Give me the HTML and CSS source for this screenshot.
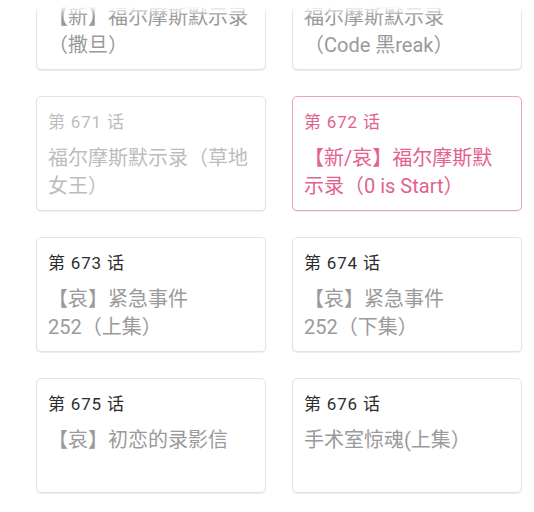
FILE: index.html
```html
<!DOCTYPE html>
<html lang="zh-CN">
<head>
<meta charset="utf-8">
<title>剧集列表</title>
<link rel="stylesheet" href="styles.css">
</head>
<body>
<div class="viewport">
  <div class="fade"></div>
  <div class="list">
    <div class="card">
      <div class="title">第 669 话</div>
      <div class="name">【新】福尔摩斯默示录（撒旦）</div>
    </div>
    <div class="card">
      <div class="title">第 670 话</div>
      <div class="name">福尔摩斯默示录<br>（Code 黑reak）</div>
    </div>
    <div class="card watched">
      <div class="title">第 671 话</div>
      <div class="name">福尔摩斯默示录（草地女王）</div>
    </div>
    <div class="card current">
      <div class="title">第 672 话</div>
      <div class="name">【新/哀】福尔摩斯默示录（0 is Start）</div>
    </div>
    <div class="card">
      <div class="title">第 673 话</div>
      <div class="name">【哀】紧急事件<br>252（上集）</div>
    </div>
    <div class="card">
      <div class="title">第 674 话</div>
      <div class="name">【哀】紧急事件<br>252（下集）</div>
    </div>
    <div class="card">
      <div class="title">第 675 话</div>
      <div class="name">【哀】初恋的录影信</div>
    </div>
    <div class="card">
      <div class="title">第 676 话</div>
      <div class="name">手术室惊魂(上集）</div>
    </div>
  </div>
</div>
</body>
</html>
```

FILE: styles.css
```css
html, body {
  margin: 0;
  padding: 0;
  background: #ffffff;
}

body {
  font-family: Roboto, "Noto Sans CJK SC", sans-serif;
  width: 534px;
  height: 512px;
  overflow: hidden;
}

.viewport {
  position: relative;
  height: 512px;
  overflow: hidden;
}

/* scroll fading edge at the top of the list */
.fade {
  position: absolute;
  left: 0;
  top: 0;
  right: 0;
  height: 16px;
  background: linear-gradient(to bottom, rgba(255, 255, 255, 1) 0px, rgba(255, 255, 255, 0.95) 7px, rgba(255, 255, 255, 0) 16px);
  z-index: 2;
  pointer-events: none;
}

.list {
  margin-top: -45px;
  padding-left: 36px;
  display: grid;
  grid-template-columns: 230px 230px;
  grid-auto-rows: 115px;
  column-gap: 26px;
  row-gap: 26px;
}

.card {
  box-sizing: border-box;
  border: 1px solid #e2e2e2;
  border-radius: 5px;
  box-shadow: 0 1px 1px rgba(0, 0, 0, 0.07);
  background: #ffffff;
  padding: 14px 11px 0 11px;
  overflow: hidden;
}

.title {
  font-size: 17px;
  line-height: 22px;
  letter-spacing: 0.8px;
  color: #2e2e2e;
  margin-bottom: 11px;
}

.name {
  font-size: 20px;
  line-height: 28px;
  color: #9a9a9a;
}

.watched .title,
.watched .name {
  color: #bdbdbd;
}

.current {
  border-color: #eba3bb;
}

.current .title,
.current .name {
  color: #e2628f;
}
```
